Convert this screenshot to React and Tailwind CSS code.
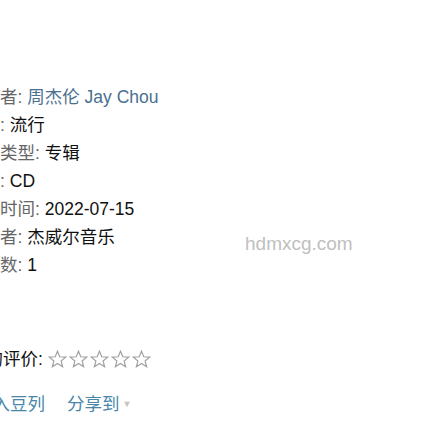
import React from "react";

function Star() {
  return (
    <svg width="19" height="18" viewBox="0 0 24 23" className="shrink-0">
      <path
        d="M12 1.5 L14.9 8.6 L22.5 9.1 L16.6 14 L18.5 21.4 L12 17.3 L5.5 21.4 L7.4 14 L1.5 9.1 L9.1 8.6 Z"
        fill="none"
        stroke="#a0a0a0"
        strokeWidth="1.5"
        strokeLinejoin="miter"
      />
    </svg>
  );
}

function Row({ label, children }) {
  return (
    <div className="whitespace-nowrap">
      <span className="text-[#666]">{label}:</span> {children}
    </div>
  );
}

export default function App() {
  return (
    <div
      className="relative w-[431px] h-[431px] overflow-hidden bg-white text-[17.5px] leading-[28px] text-[#111]"
      style={{ fontFamily: '"Liberation Sans", "Noto Sans CJK SC", sans-serif' }}
    >
      <div className="ml-[-35px] pt-[83px]">
        <Row label="表演者">
          <span className="text-[#4a7090]">周杰伦 Jay Chou</span>
        </Row>
        <Row label="流派">流行</Row>
        <Row label="专辑类型">专辑</Row>
        <Row label="介质">CD</Row>
        <Row label="发行时间">2022-07-15</Row>
        <Row label="出版者">杰威尔音乐</Row>
        <Row label="唱片数">1</Row>
      </div>

      <div className="ml-[-32px] mt-[66px] flex items-center whitespace-nowrap">
        <span className="text-[#111]">我的评价:</span>
        <span className="ml-[5px] flex items-center gap-[2px]">
          <Star />
          <Star />
          <Star />
          <Star />
          <Star />
        </span>
      </div>

      <div className="ml-[-25px] mt-[17px] flex items-center whitespace-nowrap text-[#4a86a8]">
        <span>加入豆列</span>
        <span className="ml-[22px]">分享到</span>
        <span className="ml-[3px] text-[9px] text-[#c4c4c4]">▼</span>
      </div>

      <div className="absolute left-[245px] top-[230px] text-[19px] leading-[28px] text-[#c0c0c0]">
        hdmxcg.com
      </div>
    </div>
  );
}
